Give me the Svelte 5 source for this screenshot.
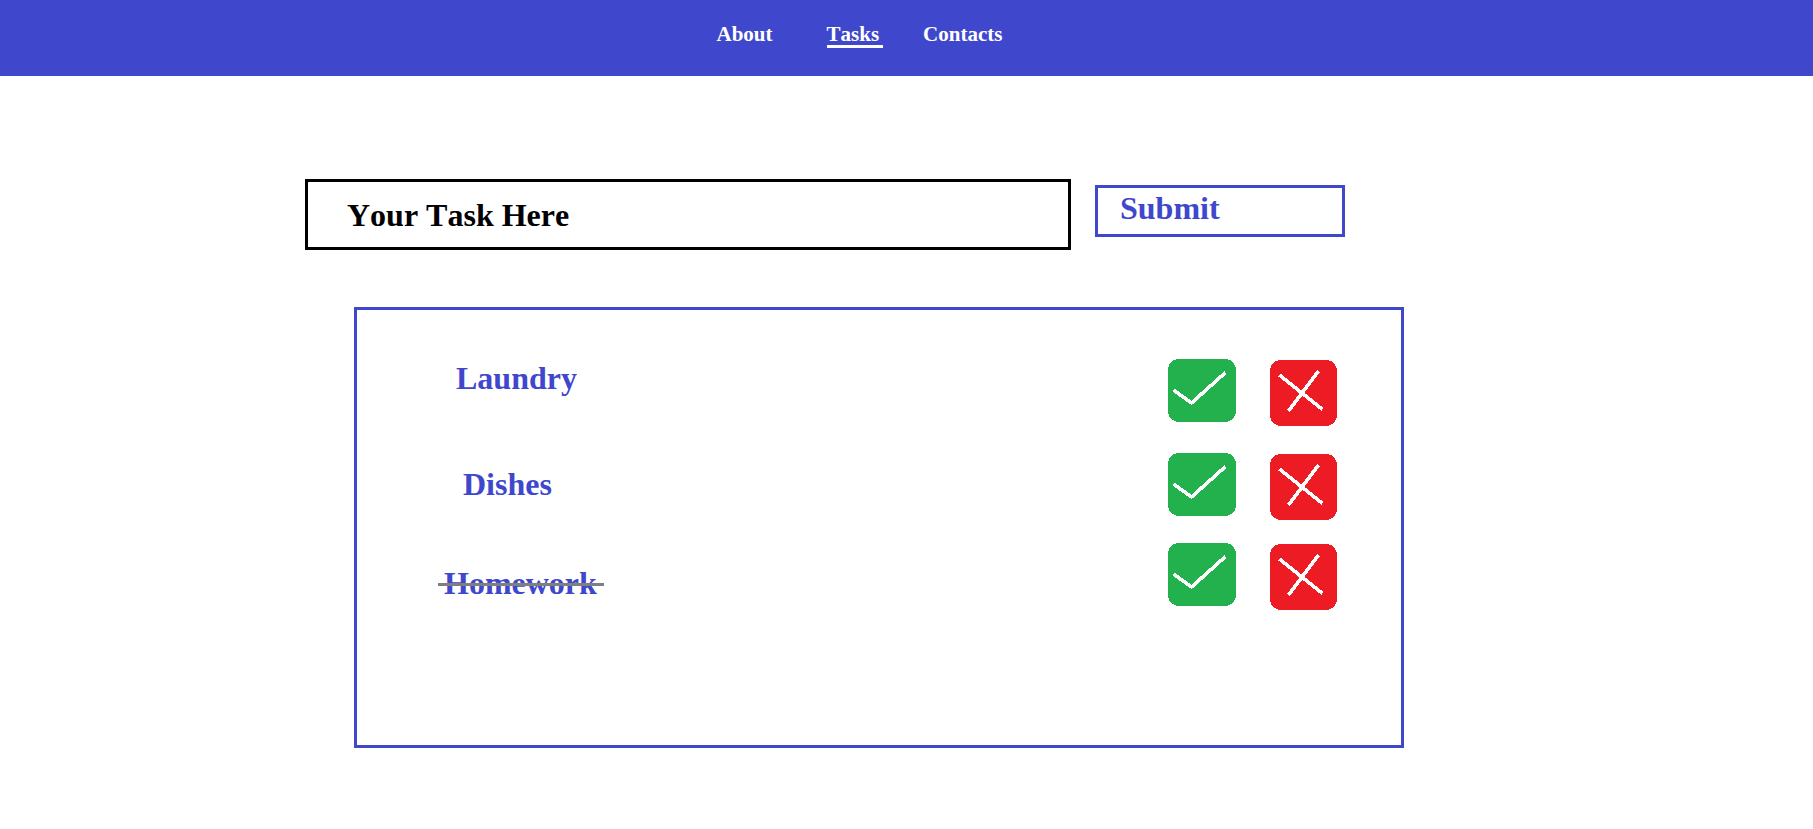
<script>
  let tasks = $state([
    { name: 'Laundry', done: false },
    { name: 'Dishes', done: false },
    { name: 'Homework', done: true },
  ]);
  let draft = $state('');

  function add(event) {
    event.preventDefault();
    if (!draft.trim()) return;
    tasks.push({ name: draft.trim(), done: false });
    draft = '';
  }
</script>

<header>
  <nav>
    <a class="about" href="#about">About</a>
    <a class="current" href="#tasks" aria-current="page">Tasks</a>
    <a href="#contacts">Contacts</a>
  </nav>
</header>

<main>
  <div class="entry">
    <form onsubmit={add}>
      <input type="text" placeholder="Your Task Here" aria-label="Your Task Here" bind:value={draft} />
      <button class="submit" type="submit">Submit</button>
    </form>
  </div>

  <div class="board">
    <ul>
      {#each tasks as task, i}
        <li>
          <span class="name" class:done={task.done}>{task.name}</span>
          <div class="actions">
            <button class="icon" aria-label="Complete {task.name}" onclick={() => (task.done = !task.done)}>
              <svg width="68" height="63" viewBox="0 0 68 63" shape-rendering="crispEdges">
                <rect width="68" height="63" rx="11" fill="#22b14c" />
                <path d="M5.5 31 23.5 44 57.5 13.5" />
              </svg>
            </button>
            <button class="icon remove" aria-label="Delete {task.name}" onclick={() => tasks.splice(i, 1)}>
              <svg width="67" height="66" viewBox="0 0 67 66" shape-rendering="crispEdges">
                <rect width="67" height="66" rx="11" fill="#ed1c24" />
                <path d="M9.5 15 52.5 49.5M48.5 11 18.5 51" />
              </svg>
            </button>
          </div>
        </li>
      {/each}
    </ul>
  </div>
</main>

<style>
  :global(body) {
    margin: 0;
    background: #fff;
    font-family: 'Liberation Serif', 'Times New Roman', serif;
    font-weight: bold;
    font-kerning: none;
  }

  header {
    display: grid;
    grid-template-columns: 716fr auto 810fr;
    box-sizing: border-box;
    min-height: 76px;
    padding-top: 23px;
    background: #3f48cc;
  }

  nav {
    grid-column: 2;
    display: flex;
    align-items: flex-start;
    gap: 40px;
  }

  nav a {
    color: #fff;
    font-size: 21px;
    line-height: 22px;
    text-decoration: none;
  }

  .about {
    margin-right: 14px;
  }

  .current {
    padding-right: 4px;
    border-bottom: 3px solid #fff;
  }

  .entry {
    display: grid;
    grid-template-columns: 305fr 1040fr 468fr;
    padding-top: 103px;
  }

  form {
    grid-column: 2;
    display: flex;
    align-items: flex-start;
    gap: 24px;
  }

  input,
  button {
    box-sizing: border-box;
    margin: 0;
    border-radius: 0;
    background: none;
    font: inherit;
    font-kerning: none;
  }

  input {
    flex: 1;
    min-width: 0;
    height: 71px;
    padding: 15px 39px 14px;
    border: 3px solid #000;
    color: #000;
    font-size: 32px;
    line-height: 36px;
  }

  input::placeholder {
    color: #000;
    opacity: 1;
  }

  .submit {
    flex: 0 0 250px;
    margin-top: 6px;
    padding: 2px 22px 8px;
    border: 3px solid #3f48cc;
    color: #3f48cc;
    font-size: 32px;
    line-height: 36px;
    text-align: left;
    cursor: pointer;
  }

  .board {
    display: grid;
    grid-template-columns: 354fr 1050fr 409fr;
    padding: 57px 0 48px;
  }

  ul {
    grid-column: 2;
    box-sizing: border-box;
    min-height: 441px;
    margin: 0;
    padding: 49px 64px 48px 81px;
    border: 3px solid #3f48cc;
    list-style: none;
  }

  li {
    display: flex;
    align-items: flex-start;
    justify-content: space-between;
    margin-bottom: 23px;
  }

  .name {
    position: relative;
    margin-top: 22px;
    padding: 0 7px 0 6px;
    color: #3f48cc;
    font-size: 32px;
    line-height: 36px;
  }

  li:nth-child(1) {
    margin-bottom: 27px;
  }

  li:nth-child(1) .name {
    margin: 1px 0 0 12px;
  }

  li:nth-child(2) .name {
    margin: 13px 0 0 19px;
  }

  .done::after {
    content: '';
    position: absolute;
    top: 18px;
    left: 0;
    right: 0;
    height: 3px;
    background: #7f7f7f;
  }

  .actions {
    display: flex;
    align-items: flex-start;
    gap: 34px;
  }

  .icon {
    padding: 0;
    border: 0;
    cursor: pointer;
  }

  .remove {
    margin-top: 1px;
  }

  svg {
    display: block;
  }

  svg path {
    fill: none;
    stroke: #fff;
    stroke-width: 3.6;
  }
</style>
